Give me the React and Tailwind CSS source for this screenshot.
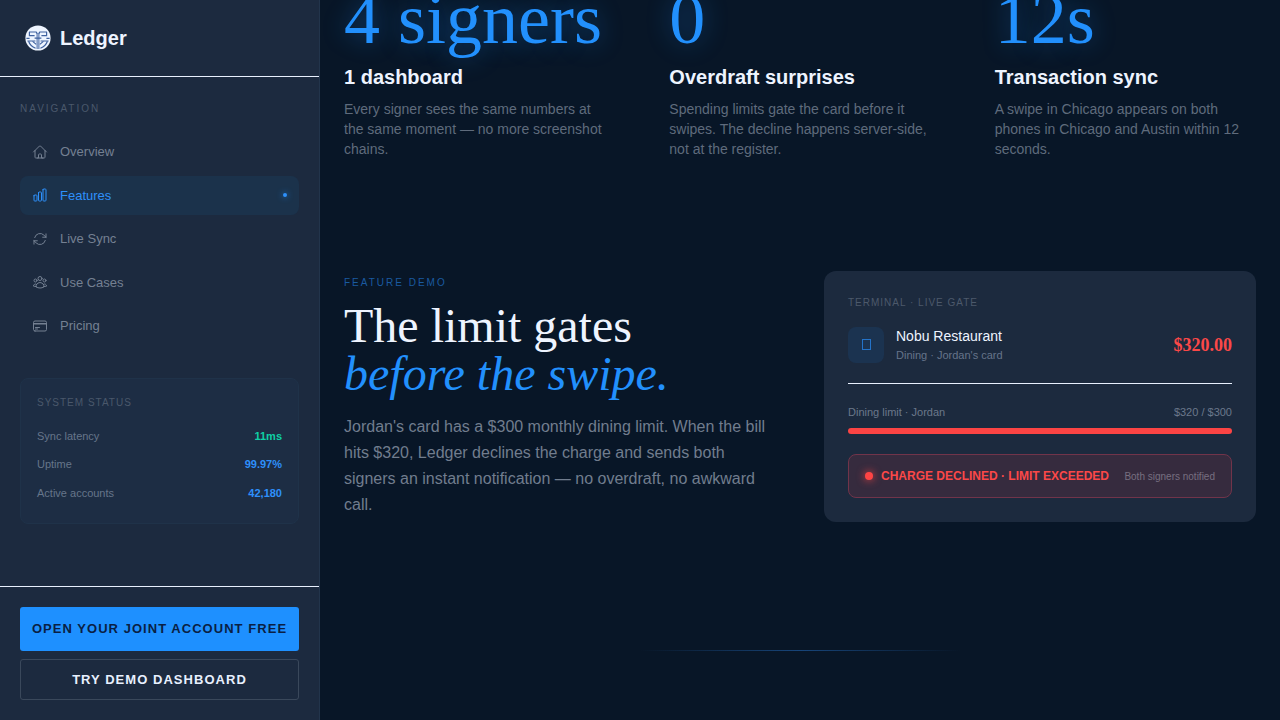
import clsx from 'clsx'
import {
  HiOutlineHome,
  HiOutlineChartBar,
  HiOutlineArrowPath,
  HiOutlineUserGroup,
  HiOutlineCreditCard,
} from 'react-icons/hi2'

const navItems = [
  { label: 'Overview', href: '#overview', icon: HiOutlineHome },
  { label: 'Features', href: '#features', icon: HiOutlineChartBar, active: true },
  { label: 'Live Sync', href: '#live-sync', icon: HiOutlineArrowPath },
  { label: 'Use Cases', href: '#use-cases', icon: HiOutlineUserGroup },
  { label: 'Pricing', href: '#pricing', icon: HiOutlineCreditCard },
]

const statusRows = [
  { label: 'Sync latency', value: '11ms', color: 'text-[#0fd0a5]' },
  { label: 'Uptime', value: '99.97%', color: 'text-[#2e90fb]' },
  { label: 'Active accounts', value: '42,180', color: 'text-[#2e90fb]' },
]

const stats = [
  {
    value: '4 signers',
    title: '1 dashboard',
    text: 'Every signer sees the same numbers at the same moment — no more screenshot chains.',
  },
  {
    value: '0',
    title: 'Overdraft surprises',
    text: 'Spending limits gate the card before it swipes. The decline happens server-side, not at the register.',
  },
  {
    value: '12s',
    title: 'Transaction sync',
    text: 'A swipe in Chicago appears on both phones in Chicago and Austin within 12 seconds.',
  },
]

function Logo() {
  return (
    <svg viewBox="0 0 28 28" className="size-7" fill="none" aria-hidden="true">
      <circle cx="14" cy="14" r="12.6" fill="#eef5ff" />
      <g stroke="#3f62a0" strokeWidth="1.2">
        <path d="M5 8h7.2l1 1.6M23 8h-7.2l-1 1.6" />
        <path d="M5.4 8v3.6h5.2M22.6 8v3.6h-5.2" />
        <path d="M2.4 14.4h3.2M22.4 14.4h3.2M10.6 14.2h6.8" />
        <path d="M3.4 17h8M24.6 17h-8" />
        <path d="M4.6 17.2c1 3 3.6 5.6 7 7M23.4 17.2c-1 3-3.6 5.6-7 7" />
        <path d="M8.6 17.4l3.6 3M19.4 17.4l-3.6 3" />
        <path d="M13.1 9v16M14.9 9v16" strokeWidth="1" />
      </g>
    </svg>
  )
}

function Sidebar() {
  return (
    <aside className="sticky top-0 flex h-screen w-80 shrink-0 flex-col border-r border-[#22344b] bg-[#1c2a3f]">
      <div className="flex items-center gap-2 border-b border-[#e8f0fe] p-6">
        <Logo />
        <span className="text-xl font-bold text-[#eef4ff]">Ledger</span>
      </div>

      <div className="flex-1 px-5 pt-6">
        <p className="mb-4 text-[10px] leading-normal tracking-[2px] text-[#4a586b]">NAVIGATION</p>
        <nav className="flex flex-col gap-1">
          {navItems.map(({ label, href, icon: Icon, active }) => (
            <a
              key={label}
              href={href}
              className={clsx(
                'flex items-center gap-3 rounded-lg px-3 py-2.5 text-[13px] leading-normal',
                active ? 'bg-[#1b324b] text-[#2e90fb]' : 'text-[#748092]'
              )}
            >
              <Icon size={16} />
              {label}
              {active && <span className="ml-auto size-1 rounded-full bg-[#2e90fb] shadow-[0_0_6px_#1e90ff]" />}
            </a>
          ))}
        </nav>

        <section className="mt-8 rounded-lg border border-[#1f3249] bg-[#1d2d44] p-4">
          <h2 className="mb-3 text-[10px] leading-normal tracking-[1px] text-[#4a586b]">SYSTEM STATUS</h2>
          <dl>
            {statusRows.map((row) => (
              <div key={row.label} className="flex justify-between py-1.5 text-[11px] leading-normal">
                <dt className="text-[#66758a]">{row.label}</dt>
                <dd className={clsx('font-bold', row.color)}>{row.value}</dd>
              </div>
            ))}
          </dl>
        </section>
      </div>

      <div className="flex flex-col gap-2 border-t border-[#e8f0fe] p-5">
        <button type="button" className="rounded-[3px] bg-[#1e90ff] py-3 text-[13px] leading-normal font-bold tracking-[0.08em] whitespace-nowrap text-[#0a1f44]">
          OPEN YOUR JOINT ACCOUNT FREE
        </button>
        <button type="button" className="rounded-[3px] border border-[#3a485b] py-2.5 text-[13px] leading-normal font-bold tracking-[0.08em] text-[#e8f0fe]">
          TRY DEMO DASHBOARD
        </button>
      </div>
    </aside>
  )
}

function TerminalCard() {
  return (
    <div className="rounded-xl bg-[#1c2a3e] p-6">
      <h3 className="mb-4 text-[10px] leading-normal tracking-[1px] text-[#4c596b]">TERMINAL · LIVE GATE</h3>

      <div className="flex items-center gap-3 border-b border-[#e8f0fe] pb-5">
        <div className="flex size-9 items-center justify-center rounded-lg bg-[#1b3350]">
          <span className="h-[11px] w-[9px] border border-[#2473c8]" />
        </div>
        <div className="flex-1">
          <p className="text-sm leading-normal text-[#eef4ff]">Nobu Restaurant</p>
          <p className="text-[11px] leading-4 text-[#66748a]">Dining · Jordan's card</p>
        </div>
        <p className="font-['Liberation_Serif',serif] text-lg leading-6 font-bold text-[#fb4848]">$320.00</p>
      </div>

      {/* Limit meter */}
      <div className="mt-5 mb-2 flex justify-between text-[11px] leading-4 text-[#6b788b]">
        <span>Dining limit · Jordan</span>
        <span>$320 / $300</span>
      </div>
      <div className="h-1.5 rounded-[3px] bg-[#fb4444]" />

      <div className="mt-5 flex items-center gap-2 rounded-lg border border-[#71344a] bg-[#362b3e] px-4 py-3">
        <span className="size-2 rounded-full bg-[#ff4444] shadow-[0_0_8px_#ff4444]" />
        <span className="text-xs leading-normal font-bold whitespace-nowrap text-[#fb4848]">CHARGE DECLINED · LIMIT EXCEEDED</span>
        <span className="ml-auto text-[10px] whitespace-nowrap text-[#776f80]">Both signers notified</span>
      </div>
    </div>
  )
}

export default function App() {
  return (
    <div className="flex min-h-screen bg-[#081627] font-['Liberation_Sans',Arial,sans-serif]">
      <Sidebar />

      <main className="min-w-0 flex-1 overflow-hidden px-6">
        {/* the page sits scrolled partway into the stats */}
        <section className="-mt-[17px] grid grid-cols-3 gap-16">
          {stats.map((stat) => (
            <div key={stat.title}>
              <p className="font-['Liberation_Serif',serif] text-7xl leading-none whitespace-nowrap text-[#2290fd] [text-shadow:0_0_24px_rgba(30,144,255,0.4)]">
                {stat.value}
              </p>
              <h3 className="mt-2 text-xl font-bold text-[#eef4ff]">{stat.title}</h3>
              <p className="mt-2 text-sm text-[#5f6b7c]">{stat.text}</p>
            </div>
          ))}
        </section>

        <section className="mt-28 grid grid-cols-2 items-center gap-12">
          <div>
            <p className="text-[10px] leading-normal tracking-[2px] text-[#1a5aa0]">FEATURE DEMO</p>
            <h2 className="mt-3 font-['Liberation_Serif',serif] text-5xl leading-none text-[#eef4ff]">
              The limit gates
              <em className="block text-[#2290fd]">before the swipe.</em>
            </h2>
            <p className="mt-4 text-base leading-[26px] text-[#717d8e]">
              Jordan's card has a $300 monthly dining limit. When the bill hits $320, Ledger declines the charge and
              sends both signers an instant notification — no overdraft, no awkward call.
            </p>
          </div>
          <TerminalCard />
        </section>

        <div className="mx-auto mt-32 h-px w-80 bg-linear-to-r from-transparent via-[#17457a] to-transparent" />
      </main>
    </div>
  )
}
